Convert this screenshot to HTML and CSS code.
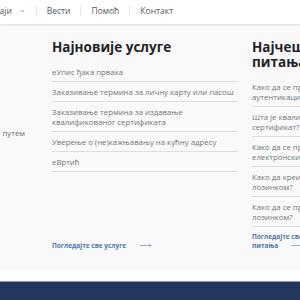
FILE: index.html
```html
<!DOCTYPE html>
<html lang="sr">

<head>
    <meta charset="UTF-8">
    <meta name="viewport" content="width=device-width, initial-scale=1.0">
    <title>еУправа</title>
    <link rel="stylesheet" href="styles.css">
</head>

<body>
    <header class='topbar'>
        <nav class='menu'>
            <a href="#">Догађаји <span class='chevron'>&#8964;</span></a>
            <span class='sep'></span>
            <a href="#">Вести</a>
            <span class='sep'></span>
            <a href="#">Помоћ</a>
            <span class='sep'></span>
            <a href="#">Контакт</a>
        </nav>
    </header>

    <section class='services'>
        <div class='row'>
            <div class='col intro'>
                <p>Користите електронске услуге путем</p>
            </div>

            <div class='col'>
                <h2>Најновије услуге</h2>
                <ul class='list'>
                    <li>еУпис ђака првака</li>
                    <li>Заказивање термина за личну карту или пасош</li>
                    <li>Заказивање термина за издавање квалификованог сертификата</li>
                    <li>Уверење о (не)кажњавању на кућну адресу</li>
                    <li>еВртић</li>
                </ul>
                <a class='more' href="#">Погледајте све услуге <span class='arrow'>&#10230;</span></a>
            </div>

            <div class='col narrow'>
                <h2>Најчешћа питања</h2>
                <ul class='list'>
                    <li>Како да се пријавим аутентикацијом?</li>
                    <li>Шта је квалификовани сертификат?</li>
                    <li>Како да се пријавим електронским кључем?</li>
                    <li>Како да креирам налог са лозинком?</li>
                    <li>Како да се пријавим са лозинком?</li>
                </ul>
                <a class='more' href="#">Погледајте сва питања <span class='arrow'>&#10230;</span></a>
            </div>
        </div>
    </section>

    <div class='gap'></div>
    <footer class='footer'></footer>
</body>

</html>
```

FILE: styles.css
```css
body {
    margin: 0;
    padding: 0;
    font-family: "Open Sans", "DejaVu Sans", sans-serif;
    background-color: #ffffff;
    overflow: hidden;
}

.topbar {
    height: 24px;
    background-color: #ffffff;
    box-shadow: 0 1px 2px rgba(0, 0, 0, 0.12);
    position: relative;
    z-index: 1;
}

.menu {
    display: flex;
    align-items: center;
    height: 21px;
    margin-left: -25px;
    gap: 8px;
    font-size: 8.5px;
}

.menu a {
    color: #555a60;
    text-decoration: none;
    white-space: nowrap;
}

.chevron {
    font-size: 8px;
    color: #9aa0a8;
    margin-left: 5px;
    position: relative;
    top: -2px;
}

.sep {
    width: 1px;
    height: 11px;
    background-color: #e6e6e6;
    margin: 0 2px;
}

.services {
    background-color: #f9f9f9;
    padding: 16px 0 20px;
}

.row {
    display: flex;
    gap: 14px;
    margin-left: -148px;
}

.col {
    width: 186px;
    flex-shrink: 0;
    display: flex;
    flex-direction: column;
}

.narrow {
    width: 104px;
}

.narrow .more {
    max-width: 78px;
}

.intro {
    text-align: right;
    padding-right: 13px;
    box-sizing: border-box;
}

.intro p {
    margin: 88px 0 0;
    font-size: 7.8px;
    color: #6b6f75;
    white-space: nowrap;
}

h2 {
    margin: 0 0 7px;
    font-size: 13.5px;
    line-height: 15px;
    font-weight: 700;
    color: #1f2226;
}

.list {
    list-style: none;
    margin: 0;
    padding: 0;
}

.list li {
    font-size: 7.8px;
    line-height: 10px;
    padding: 4.5px 0;
    color: #72767c;
    border-bottom: 1px solid #dedede;
}

.more {
    margin-top: auto;
    padding-top: 5px;
    font-size: 6.5px;
    line-height: 9px;
    font-weight: 700;
    color: #4b78ad;
    text-decoration: none;
}

.arrow {
    font-weight: 400;
    font-size: 9px;
    line-height: 0;
    color: #8ba6c9;
    margin-left: 11px;
}

.gap {
    height: 11px;
    background-color: #ffffff;
}

.footer {
    height: 30px;
    background-color: #25375e;
    border-top: 1px solid #8a9ab3;
}
```
